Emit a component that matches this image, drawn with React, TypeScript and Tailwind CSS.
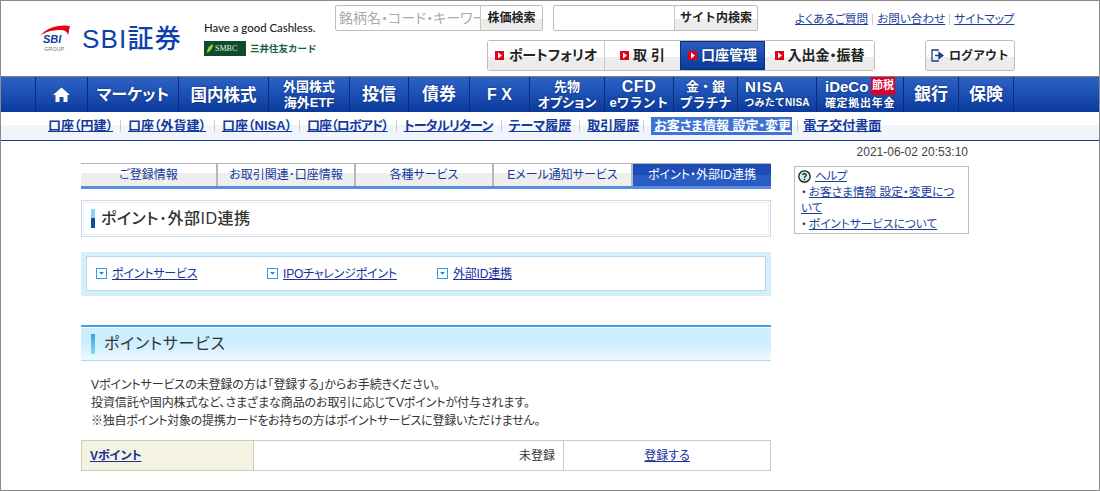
import React from "react";

const font = "font-['Liberation_Sans','Noto_Sans_CJK_JP',sans-serif]";

const navItems: { w: string; lines: string[]; cls?: string; first?: string }[] = [
  { w: "w-[91px]", lines: ["マーケット"], cls: "text-[16px] tracking-[0px] [font-feature-settings:'palt']" },
  { w: "w-[90px]", lines: ["国内株式"], cls: "text-[16.5px]" },
  { w: "w-[81px]", lines: ["外国株式", "海外ETF"], cls: "text-[13px]" },
  { w: "w-[59px]", lines: ["投信"], cls: "text-[17px]" },
  { w: "w-[61px]", lines: ["債券"], cls: "text-[17px]" },
  { w: "w-[60px]", lines: ["F X"], cls: "text-[16px]" },
  { w: "w-[75px]", lines: ["先物", "オプション"], cls: "text-[13px] [font-feature-settings:'palt']" },
  { w: "w-[69px]", lines: ["CFD", "eワラント"], cls: "text-[13px]", first: "text-[16px] tracking-[0.5px]" },
  { w: "w-[64px]", lines: ["金・銀", "プラチナ"], cls: "text-[13px]" },
];

const subItems: { t: string; cls: string }[] = [
  { t: "口座（円建）", cls: "mr-[7px]" },
  { t: "口座（外貨建）", cls: "mr-[8px]" },
  { t: "口座（NISA）", cls: "mr-[7px]" },
  { t: "口座（ロボアド）", cls: "mr-[8px] tracking-[-1px]" },
  { t: "トータルリターン", cls: "mr-[8px] tracking-[-0.75px]" },
  { t: "テーマ履歴", cls: "mr-[8px]" },
  { t: "取引履歴", cls: "mr-[4px]" },
];

const tabs = ["ご登録情報", "お取引関連･口座情報", "各種サービス", "Eメール通知サービス"];

function RedMark() {
  return (
    <svg width="9" height="9" viewBox="0 0 9 9" className="shrink-0">
      <rect width="9" height="9" fill="#e2001a" />
      <path d="M3 1.5 L7 4.5 L3 7.5 Z" fill="#fff" />
    </svg>
  );
}

function AnchorMark() {
  return (
    <svg width="11" height="11" viewBox="0 0 11 11" className="shrink-0">
      <rect x="0.5" y="0.5" width="10" height="10" fill="#fff" stroke="#2f9cf0" />
      <path d="M3 4 H8 L5.5 6.8 Z" fill="#2f7fd0" />
    </svg>
  );
}

function Logo() {
  return (
    <div className="flex items-center w-[164px]">
      <svg width="30" height="28" viewBox="0 0 30 28" className="shrink-0">
        <path d="M0 11 C6 3 19 -1 30 1 C29 4 29 7 28 10 C27 6 24 5 20 5 C12 5 5 7 0 11 Z" fill="#e60012" />
        <text x="3" y="18" fontSize="11" fontWeight="700" fontStyle="italic" fill="#123a9c" fontFamily="Liberation Sans">SBI</text>
        <text x="4" y="26" fontSize="5.5" fill="#777" fontFamily="Liberation Sans">GROUP</text>
      </svg>
      <span className="ml-[12px] text-[26px] leading-none text-[#0f3fa8] font-medium tracking-[1.2px] whitespace-nowrap">SBI証券</span>
    </div>
  );
}

function Tagline() {
  return (
    <div className="w-[131px] flex flex-col pt-[20px]">
      <span className="text-[11.4px] leading-[14px] text-[#222] font-['Lato',sans-serif] font-medium whitespace-nowrap">Have a good Cashless.</span>
      <div className="flex items-center mt-[6px]">
        <div className="w-[42px] h-[15px] bg-[#0f4d2a] flex items-center pl-[2px] gap-[1px]">
          <svg width="8" height="11" viewBox="0 0 8 11"><path d="M1 10 C1 5 4 2 7 1 C7 5 5 8 1 10 Z" fill="#a8c83c" /></svg>
          <span className="text-[8px] leading-none text-[#e8efe5] font-['Liberation_Serif',serif]">SMBC</span>
        </div>
        <span className="ml-[4px] text-[9.5px] leading-none font-bold text-[#17603a] whitespace-nowrap">三井住友カード</span>
      </div>
    </div>
  );
}

function GrayBtn({ children, cls }: { children: React.ReactNode; cls: string }) {
  return (
    <div className={`flex items-center justify-center bg-[linear-gradient(#ffffff_55%,#ececec_55%)] text-[#222] font-bold ${cls}`}>
      {children}
    </div>
  );
}

export default function App() {
  return (
    <div className={`w-[1100px] h-[491px] overflow-hidden bg-white border border-[#8a8a8a] text-[12px] text-[#333] ${font}`}>
      {/* Header */}
      <header className="flex h-[75px] pl-[39px]">
        <Logo />
        <Tagline />
        <div className="flex flex-col">
          <div className="flex items-start pt-[4px] h-[39px]">
            <div className="flex w-[208px] h-[26px] border border-[#bdbdbd] rounded-[2px]">
              <div className="w-[144px] overflow-hidden whitespace-nowrap text-[14px] leading-[24px] pl-[3px] text-[#aaa] [font-feature-settings:'palt']">銘柄名・コード・キーワード</div>
              <GrayBtn cls="flex-1 border-l border-[#c8c8c8] text-[12px]">株価検索</GrayBtn>
            </div>
            <div className="flex ml-[10px] w-[205px] h-[26px] border border-[#bdbdbd] rounded-[2px]">
              <div className="w-[120px]" />
              <GrayBtn cls="flex-1 border-l border-[#c8c8c8] text-[12px]">サイト内検索</GrayBtn>
            </div>
            <div className="flex items-center ml-[37px] mt-[6px] text-[#1a3f9c] text-[11.6px] leading-[16px] whitespace-nowrap [font-feature-settings:'palt']">
              <a className="underline">よくあるご質問</a>
              <span className="mx-[4px] h-[11px] w-px bg-[#ccc]" />
              <a className="underline">お問い合わせ</a>
              <span className="mx-[4px] h-[11px] w-px bg-[#ccc]" />
              <a className="underline">サイトマップ</a>
            </div>
          </div>
          <div className="flex ml-[152px] h-[31px]">
            <div className="flex w-[388px] border border-[#bdbdbd] rounded-[3px] text-[14px] [font-feature-settings:'palt']">
              <GrayBtn cls="w-[117px] gap-[5px] border-r border-[#c8c8c8]"><RedMark />ポートフォリオ</GrayBtn>
              <GrayBtn cls="w-[75px] gap-[4px]"><RedMark />取 引</GrayBtn>
              <div className="w-[85px] flex items-center justify-center gap-[4px] font-bold text-white bg-[linear-gradient(#2a5cc0,#0b3a9c)] border border-[#0b2f80] [text-shadow:0_0_2px_#0a2a70]"><RedMark />口座管理</div>
              <GrayBtn cls="flex-1 gap-[4px]"><RedMark />入出金・振替</GrayBtn>
            </div>
            <GrayBtn cls="ml-[50px] w-[90px] gap-[5px] border border-[#bdbdbd] rounded-[3px] text-[12px]">
              <svg width="13" height="13" viewBox="0 0 13 13" fill="none" stroke="#1a3f8f" strokeWidth="1.3">
                <path d="M7 2 V1 H1 V12 H7 V11" />
                <path d="M4 6.5 H9 M8 3.5 L12 6.5 L8 9.5 Z" fill="#1a3f8f" />
              </svg>
              ログアウト
            </GrayBtn>
          </div>
        </div>
      </header>

      {/* Global nav */}
      <nav className="flex h-[36px] border-t border-[#7f7f7f] bg-[linear-gradient(#2f62c6,#1c4fb2_50%,#0a3a9c)] text-white font-bold [text-shadow:0_0_2px_#0a2a70]">
        <div className="w-[35px] shrink-0 border-r border-[#0c2d78]" />
        <div className="w-[52px] shrink-0 border-r border-[#0c2d78] flex items-center justify-center">
          <svg width="17" height="15" viewBox="0 0 17 15"><path d="M8.5 0.5 L17 8 H14.5 V15 H10.5 V10 H6.5 V15 H2.5 V8 H0 Z" fill="#fff" /></svg>
        </div>
        {navItems.map((n) => (
          <div key={n.lines[0]} className={`${n.w} shrink-0 border-r border-[#0c2d78] flex flex-col items-center justify-center whitespace-nowrap ${n.cls}`}>
            {n.lines.map((l, i) => (
              <span key={l} className={`${n.lines.length > 1 ? "leading-[16px]" : "leading-[20px]"} ${i === 0 && n.first ? n.first : ""}`}>{l}</span>
            ))}
          </div>
        ))}
        <div className="w-[79px] shrink-0 border-r border-[#0c2d78] flex flex-col items-center justify-center whitespace-nowrap">
          <span className="text-[15px] leading-[16px] tracking-[1px] self-start pl-[7px]">NISA</span>
          <span className="text-[10px] leading-[16px] tracking-[0.2px]">つみたてNISA</span>
        </div>
        <div className="relative w-[87px] shrink-0 border-r border-[#0c2d78] flex flex-col items-center justify-center whitespace-nowrap">
          <span className="text-[15px] leading-[16px] self-start pl-[8px]">iDeCo</span>
          <span className="text-[11px] leading-[16px] tracking-[0.7px]">確定拠出年金</span>
          <span className="absolute right-[8px] top-0 w-[24px] h-[18px] bg-[#d9002b] text-[11px] leading-[17px] text-center [text-shadow:none]">節税</span>
        </div>
        <div className="w-[55px] shrink-0 border-r border-[#0c2d78] flex items-center justify-center text-[17px]">銀行</div>
        <div className="w-[55px] shrink-0 border-r border-[#0c2d78] flex items-center justify-center text-[17px]">保険</div>
      </nav>

      {/* Sub nav */}
      <div className="flex items-center h-[29px] pl-[47px] border-b border-[#1a3f8f] bg-[linear-gradient(#ffffff_45%,#f2f4fb_45%)] text-[#123a9c] font-bold text-[13px] whitespace-nowrap [font-feature-settings:'palt']">
        {subItems.map((s) => (
          <React.Fragment key={s.t}>
            <a className={`underline ${s.cls}`}>{s.t}</a>
            <span className="mr-[7px] h-[12px] w-px bg-[#ccc]" />
          </React.Fragment>
        ))}
        <a className="underline bg-[#3f74d6] text-white px-[3px] h-[18px] leading-[18px] w-[141px]">お客さま情報 設定・変更</a>
        <span className="mx-[5px] h-[12px] w-px bg-[#ccc]" />
        <a className="underline">電子交付書面</a>
      </div>

      {/* Body */}
      <div className="flex pl-[80px] pt-[2px]">
        <main className="w-[690px] shrink-0 pt-[20px]">
          <div className="flex h-[26px] border-t border-[#b0b4b8] border-b-[3px] border-b-[#5a8de0]">
            {tabs.map((t, i) => (
              <div key={t} className={`${i === 0 ? "w-[137px]" : i === 3 ? "w-[139px]" : "w-[138px]"} border-r-2 border-r-[#b5b8bb] flex items-center justify-center text-[#123a9c] bg-[linear-gradient(#ffffff_40%,#eeeeee_40%)] whitespace-nowrap [font-feature-settings:'palt']`}>{t}</div>
            ))}
            <div className="flex-1 flex items-center justify-center text-white bg-[linear-gradient(#1c4cb4_50%,#2b5cc4_50%)] whitespace-nowrap [font-feature-settings:'palt']">ポイント・外部ID連携</div>
          </div>

          <div className="mt-[11px] h-[37px] border border-[#c9dcee] p-[1px]">
            <div className="h-full border border-[#e6eef7] flex items-center pl-[7px]">
              <span className="w-[4px] h-[19px] bg-[linear-gradient(#8fd0f5_50%,#0c4f96_50%)]" />
              <h1 className="ml-[6px] text-[16px] leading-[20px] font-medium tracking-[0.5px] text-[#333] [font-feature-settings:'palt']">ポイント･外部ID連携</h1>
            </div>
          </div>

          <div className="mt-[15px] h-[44px] bg-[#d5effd] px-[5px] pt-[4px]">
            <div className="h-[35px] bg-white border border-[#b9d7f2] flex items-center pl-[9px] text-[#1a2f9c] tracking-[-0.2px] [font-feature-settings:'palt']">
              <div className="w-[171px] flex items-center gap-[5px]"><AnchorMark /><a className="underline">ポイントサービス</a></div>
              <div className="w-[170px] flex items-center gap-[5px]"><AnchorMark /><a className="underline">IPOチャレンジポイント</a></div>
              <div className="flex items-center gap-[5px]"><AnchorMark /><a className="underline">外部ID連携</a></div>
            </div>
          </div>

          <div className="mt-[29px] h-[36px] border-t-2 border-t-[#3da0e8] border-b border-b-[#a8dcf5] shadow-[inset_0_1px_0_#ffffff] bg-[linear-gradient(#cdeeff_50%,#eefaff)] flex items-center pl-[10px]">
            <span className="w-[4px] h-[20px] bg-[linear-gradient(#3da0e0,#8fd4f8)]" />
            <h2 className="ml-[9px] text-[16px] leading-[20px] tracking-[0.7px] text-[#333] [font-feature-settings:'palt']">ポイントサービス</h2>
          </div>

          <div className="mt-[15px] pl-[10px] leading-[18px] tracking-[-0.1px] [font-feature-settings:'palt'] whitespace-nowrap">
            <p>Vポイントサービスの未登録の方は「登録する」からお手続きください。</p>
            <p>投資信託や国内株式など、さまざまな商品のお取引に応じてVポイントが付与されます。</p>
            <p className="tracking-[-0.25px]">※独自ポイント対象の提携カードをお持ちの方はポイントサービスに登録いただけません。</p>
          </div>

          <div className="mt-[10px] flex h-[31px] border border-[#cfccbc] items-stretch [font-feature-settings:'palt']">
            <div className="w-[172px] bg-[#f4f2e0] border-r border-[#cfccbc] flex items-center pl-[8px] font-bold text-[#1a2f9c]"><a className="underline">Vポイント</a></div>
            <div className="w-[310px] border-r border-[#cfccbc] flex items-center justify-end pr-[8px]">未登録</div>
            <div className="flex-1 flex items-center justify-center text-[#1a2f9c]"><a className="underline">登録する</a></div>
          </div>
        </main>

        <aside className="ml-[23px] w-[175px] shrink-0">
          <div className="h-[21px] text-right pr-px leading-[16px] text-[#444] pt-[1px]">2021-06-02 20:53:10</div>
          <div className="mt-[2px] border border-[#bbb] pl-[3px] py-[1px] leading-[16px] text-[#1a3f9c] text-[11.7px] [font-feature-settings:'palt']">
            <div className="flex items-center gap-[4px]">
              <svg width="13" height="13" viewBox="0 0 13 13">
                <circle cx="6.5" cy="6.5" r="5.7" fill="#c9f0ee" stroke="#111" strokeWidth="1.2" />
                <path d="M4.6 5 C4.8 3.2 8.2 3.2 8.2 5 C8.2 6.3 6.5 6.3 6.5 7.8" fill="none" stroke="#111" strokeWidth="1.2" />
                <rect x="5.9" y="8.8" width="1.3" height="1.3" fill="#111" />
              </svg>
              <a className="underline tracking-[-0.5px]">ヘルプ</a>
            </div>
            <div className="pl-[3px] pr-[12px]"><span className="text-[#333] mr-[2px]">・</span><a className="underline">お客さま情報 設定・変更について</a></div>
            <div className="pl-[3px] whitespace-nowrap"><span className="text-[#333] mr-[2px]">・</span><a className="underline">ポイントサービスについて</a></div>
          </div>
        </aside>
      </div>
    </div>
  );
}
